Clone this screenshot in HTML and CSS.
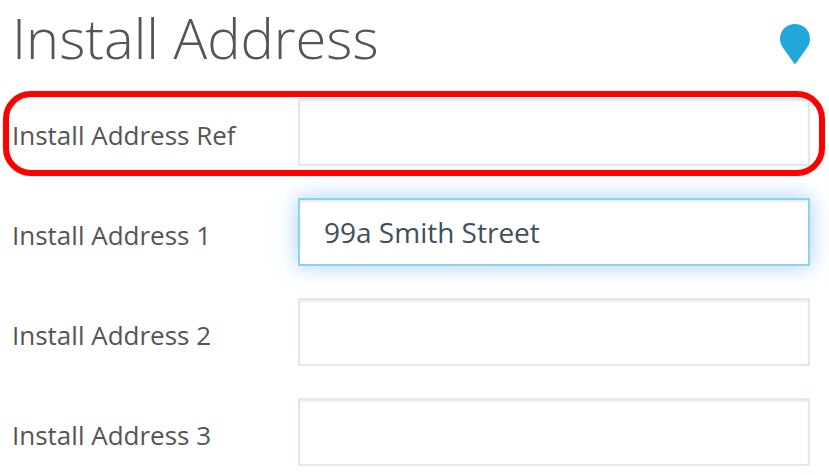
FILE: index.html
```html
<!DOCTYPE html>
<html lang="en">
<head>
  <meta charset="UTF-8" />
  <meta name="viewport" content="width=device-width, initial-scale=1.0"/>
  <title>Install Address</title>
  <link rel="stylesheet" href="styles.css">
</head>
<body>

  <form class="address-form">
    <div class="header">
      <h1>Install Address</h1>
      <svg class="pin" viewBox="0 0 30 40" aria-hidden="true">
        <path d="M15 0C6.500 0 0 6.500 0 15C0 19 1.500 21.500 3.500 24.500L14 39.300Q15 40.500 16 39.300L26.500 24.500C28.500 21.500 30 19 30 15C30 6.500 23.500 0 15 0Z"/>
      </svg>
    </div>

    <div class="field highlight">
      <label for="address-ref">Install Address Ref</label>
      <input type="text" id="address-ref">
    </div>
    <div class="field">
      <label for="address-1">Install Address 1</label>
      <input type="text" id="address-1" class="active" value="99a Smith Street">
    </div>
    <div class="field">
      <label for="address-2">Install Address 2</label>
      <input type="text" id="address-2">
    </div>
    <div class="field">
      <label for="address-3">Install Address 3</label>
      <input type="text" id="address-3">
    </div>
  </form>

</body>
</html>
```
FILE: styles.css
```css
* {
  box-sizing: border-box;
}

body {
  margin: 0;
  font-family: "Open Sans", sans-serif;
  background-color: white;
  color: #555;
}

.address-form {
  padding: 0 19px 8px 12px;
}

.header {
  display: flex;
  justify-content: space-between;
  height: 98px;
}

h1 {
  margin: 0;
  font-size: 56px;
  font-weight: 300;
  line-height: 74px;
}

.pin {
  width: 30px;
  height: 40px;
  margin-top: 24px;
  fill: #22a7d9;
}

.field {
  display: grid;
  grid-template-columns: 286px 1fr;
  align-items: center;
  position: relative;
  margin-bottom: 32px;
}

.field:last-child {
  margin-bottom: 0;
}

.field label {
  padding-top: 6px;
  font-size: 26px;
  line-height: 36px;
}

.field input {
  width: 100%;
  height: 68px;
  padding: 0 24px;
  border: 2px solid #e1e6ef;
  border-radius: 0;
  background-color: white;
  box-shadow: inset 0 2px 2px rgba(0, 0, 0, 0.07);
  color: #3f4f5b;
  font-family: inherit;
  font-size: 28px;
  outline: none;
}

.field input.active,
.field input:focus {
  border-color: #8ad4ee;
  box-shadow: inset 0 2px 2px rgba(0, 0, 0, 0.07), 0 0 20px rgba(102, 175, 233, 0.6);
}

/* red ring drawn over the row */
.highlight::after {
  content: "";
  position: absolute;
  inset: -7px -15px -10px -9px;
  border: 6px solid red;
  border-radius: 28px;
  box-shadow: 0 0 1px rgba(0, 0, 0, 0.5);
  pointer-events: none;
}
```
